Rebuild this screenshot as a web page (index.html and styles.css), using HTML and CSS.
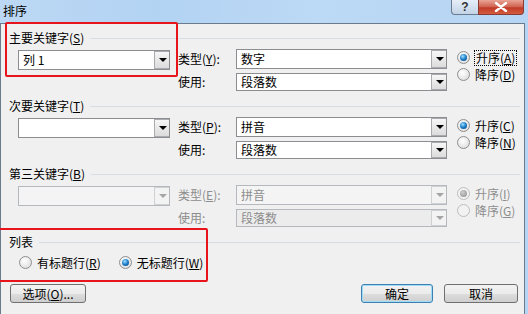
FILE: index.html
```html
<!DOCTYPE html>
<html lang="zh-CN">
<head>
    <meta charset="UTF-8">
    <title>排序</title>
    <link rel="stylesheet" href="styles.css">
</head>
<body>
    <div class="window">
        <div class="titlebar">
            <span class="title">排序</span>
            <div class="caption-buttons">
                <span class="cap-btn help">?</span>
                <span class="cap-btn close">
                    <svg width="14" height="10" viewBox="0 0 14 10"><path d="M2 1 L12 9 M12 1 L2 9" stroke="#fff" stroke-width="2.4" stroke-linecap="round"/></svg>
                </span>
            </div>
        </div>

        <div class="client">
            <!-- primary key -->
            <div class="group">
                <div class="group-head"><span>主要关键字(<u>S</u>)</span><i class="rule"></i></div>
                <div class="group-body">
                    <div class="combo key"><span class="value">列 1</span><span class="drop"></span></div>
                    <div class="fields">
                        <span class="field-label">类型(<u>Y</u>):</span>
                        <div class="combo"><span class="value">数字</span><span class="drop"></span></div>
                        <span class="field-label">使用:</span>
                        <div class="combo short"><span class="value">段落数</span><span class="drop"></span></div>
                    </div>
                    <div class="order">
                        <div class="opt"><span class="radio on"></span><span class="focus">升序(<u>A</u>)</span></div>
                        <div class="opt"><span class="radio"></span><span>降序(<u>D</u>)</span></div>
                    </div>
                </div>
            </div>

            <!-- secondary key -->
            <div class="group">
                <div class="group-head"><span>次要关键字(<u>T</u>)</span><i class="rule"></i></div>
                <div class="group-body">
                    <div class="combo key"><span class="value"></span><span class="drop"></span></div>
                    <div class="fields">
                        <span class="field-label">类型(<u>P</u>):</span>
                        <div class="combo"><span class="value">拼音</span><span class="drop"></span></div>
                        <span class="field-label">使用:</span>
                        <div class="combo short"><span class="value">段落数</span><span class="drop"></span></div>
                    </div>
                    <div class="order">
                        <div class="opt"><span class="radio on"></span><span>升序(<u>C</u>)</span></div>
                        <div class="opt"><span class="radio"></span><span>降序(<u>N</u>)</span></div>
                    </div>
                </div>
            </div>

            <!-- third key, disabled -->
            <div class="group disabled">
                <div class="group-head"><span class="enabled-text">第三关键字(<u>B</u>)</span><i class="rule"></i></div>
                <div class="group-body">
                    <div class="combo key"><span class="value"></span><span class="drop"></span></div>
                    <div class="fields">
                        <span class="field-label">类型(<u>E</u>):</span>
                        <div class="combo"><span class="value">拼音</span><span class="drop"></span></div>
                        <span class="field-label">使用:</span>
                        <div class="combo short"><span class="value">段落数</span><span class="drop"></span></div>
                    </div>
                    <div class="order">
                        <div class="opt"><span class="radio on"></span><span>升序(<u>I</u>)</span></div>
                        <div class="opt"><span class="radio"></span><span>降序(<u>G</u>)</span></div>
                    </div>
                </div>
            </div>

            <!-- list -->
            <div class="group list">
                <div class="group-head"><span>列表</span><i class="rule"></i></div>
                <div class="list-row">
                    <div class="opt"><span class="radio"></span><span>有标题行(<u>R</u>)</span></div>
                    <div class="opt"><span class="radio on"></span><span>无标题行(<u>W</u>)</span></div>
                </div>
            </div>

            <div class="buttons">
                <button class="btn options">选项(<u>O</u>)...</button>
                <span class="spacer"></span>
                <button class="btn default">确定</button>
                <button class="btn">取消</button>
            </div>
        </div>

        <div class="mark mark-key"></div>
        <div class="mark mark-list"></div>
    </div>
</body>
</html>
```

FILE: styles.css
```css
body {
    margin: 0;
    font-family: "Noto Sans CJK SC", "Liberation Sans", sans-serif;
    font-size: 12px;
    color: #000;
}
.window {
    position: relative;
    width: 528px;
    height: 314px;
    background: linear-gradient(90deg, #bcd8f4 0%, #b3d3f3 30%, #bcd9f5 60%, #b6d5f4 100%);
    overflow: hidden;
}
.titlebar {
    height: 23px;
    display: flex;
    align-items: flex-start;
}
.title {
    margin: 3px 0 0 3px;
    font-size: 12px;
    line-height: 16px;
}
.caption-buttons {
    margin-left: auto;
    margin-right: 4px;
    display: flex;
    height: 15px;
}
.cap-btn {
    height: 14px;
    border: 1px solid #6b7b90;
    border-top: none;
    display: flex;
    align-items: center;
    justify-content: center;
}
.help {
    width: 26px;
    border-radius: 0 0 0 4px;
    background: linear-gradient(#e6eef8, #c3d3e6);
    color: #333;
    font-family: "Liberation Sans", sans-serif;
    font-weight: bold;
    font-size: 12px;
    line-height: 14px;
    border-right: none;
}
.close {
    width: 44px;
    border-radius: 0 0 4px 0;
    border-color: #8a3b32;
    background: linear-gradient(#e9a496, #d0604e 50%, #c13a28 55%, #d45c3e);
}

.client {
    margin-right: 3px;
    height: 286px;
    border: 1px solid #6b7b8e;
    background: #f0f0f0;
    padding: 6px 4px 0 8px;
    box-sizing: content-box;
}
.group {
    margin-bottom: 7px;
}
.group-head {
    display: flex;
    align-items: center;
    height: 16px;
    line-height: 16px;
}
.rule {
    flex: 1;
    margin-left: 6px;
    border-top: 1px solid #d5dfe5;
}
.group-body {
    display: flex;
    align-items: flex-start;
    margin-top: 3px;
    height: 42px;
}
.combo {
    display: flex;
    align-items: center;
    box-sizing: border-box;
    width: 211px;
    height: 20px;
    border: 1px solid #8b8d90;
    background: #fff;
}
.combo .value {
    flex: 1;
    padding-left: 4px;
    line-height: 16px;
    white-space: pre;
}
.combo.short {
    height: 18px;
}
.combo.key {
    width: 152px;
    margin: 1px 0 0 9px;
}
.drop {
    position: relative;
    width: 15px;
    height: 100%;
    box-sizing: border-box;
    border: 1px solid #a9abae;
    border-right: none;
    background: linear-gradient(#f6f6f6, #dcdcdc);
}
.drop::after {
    content: "";
    position: absolute;
    left: 4px;
    top: 50%;
    margin-top: -2px;
    border-left: 4px solid transparent;
    border-right: 4px solid transparent;
    border-top: 4px solid #000;
}
.fields {
    display: grid;
    grid-template-columns: 58px 211px;
    grid-template-rows: 20px 18px;
    row-gap: 4px;
    margin-left: 8px;
    align-items: center;
}
.field-label {
    line-height: 16px;
}
.order {
    margin-left: 10px;
    display: flex;
    flex-direction: column;
}
.opt {
    display: flex;
    align-items: center;
    height: 17px;
}
.radio {
    position: relative;
    width: 11px;
    height: 11px;
    border: 1px solid #8e8f8f;
    border-radius: 50%;
    background: radial-gradient(circle at 40% 35%, #fff, #d6d6d6);
    margin-right: 5px;
    flex: none;
}
.radio.on::after {
    content: "";
    position: absolute;
    left: 2px;
    top: 2px;
    width: 7px;
    height: 7px;
    border-radius: 50%;
    background: radial-gradient(circle at 40% 35%, #9ee0ff, #1a7cc9 50%, #0a3f70);
}
.focus {
    outline: 1px dotted #000;
    outline-offset: 0;
    padding: 0 1px;
    line-height: 14px;
}

.disabled .field-label,
.disabled .order,
.disabled .combo .value {
    color: #8d8d8d;
}
.disabled .combo {
    border-color: #b5b9bd;
    background: #f4f4f4;
}
.disabled .combo.short {
    background: #ececec;
}
.disabled .drop {
    border-color: #cfd1d3;
    background: #f3f3f3;
}
.disabled .drop::after {
    border-top-color: #a5a5a5;
}
.disabled .radio {
    border-color: #bdbdbd;
    background: #f2f2f2;
}
.disabled .radio.on::after {
    background: radial-gradient(circle at 40% 35%, #cfcfcf, #8a8a8a);
}

.list-row {
    display: flex;
    margin: 4px 0 0 10px;
}
.list-row .opt {
    margin-right: 18px;
    height: 16px;
}
.list {
    margin-bottom: 0;
}
.buttons {
    display: flex;
    margin-top: 14px;
    margin-right: 2px;
}
.spacer {
    flex: 1;
}
.btn {
    height: 19px;
    padding: 0;
    font-family: inherit;
    font-size: 12px;
    line-height: 15px;
    color: #000;
    border: 1px solid #707070;
    border-radius: 3px;
    background: linear-gradient(#f2f2f2 0%, #ebebeb 50%, #dddddd 51%, #cfcfcf 100%);
}
.btn.options {
    width: 76px;
    margin-left: 1px;
}
.btn.default {
    width: 72px;
    margin-right: 11px;
    border-color: #3c7fb1;
    box-shadow: inset 0 0 0 1px #9fdcf7;
}
.btn + .btn {
    width: 74px;
}
.btn.default + .btn {
    width: 74px;
}

.mark {
    position: absolute;
    border: 2px solid #e8141b;
    border-radius: 2px;
}
.mark-key {
    left: 5px;
    top: 22px;
    width: 169px;
    height: 51px;
}
.mark-list {
    left: -2px;
    top: 228px;
    width: 206px;
    height: 50px;
}
```
